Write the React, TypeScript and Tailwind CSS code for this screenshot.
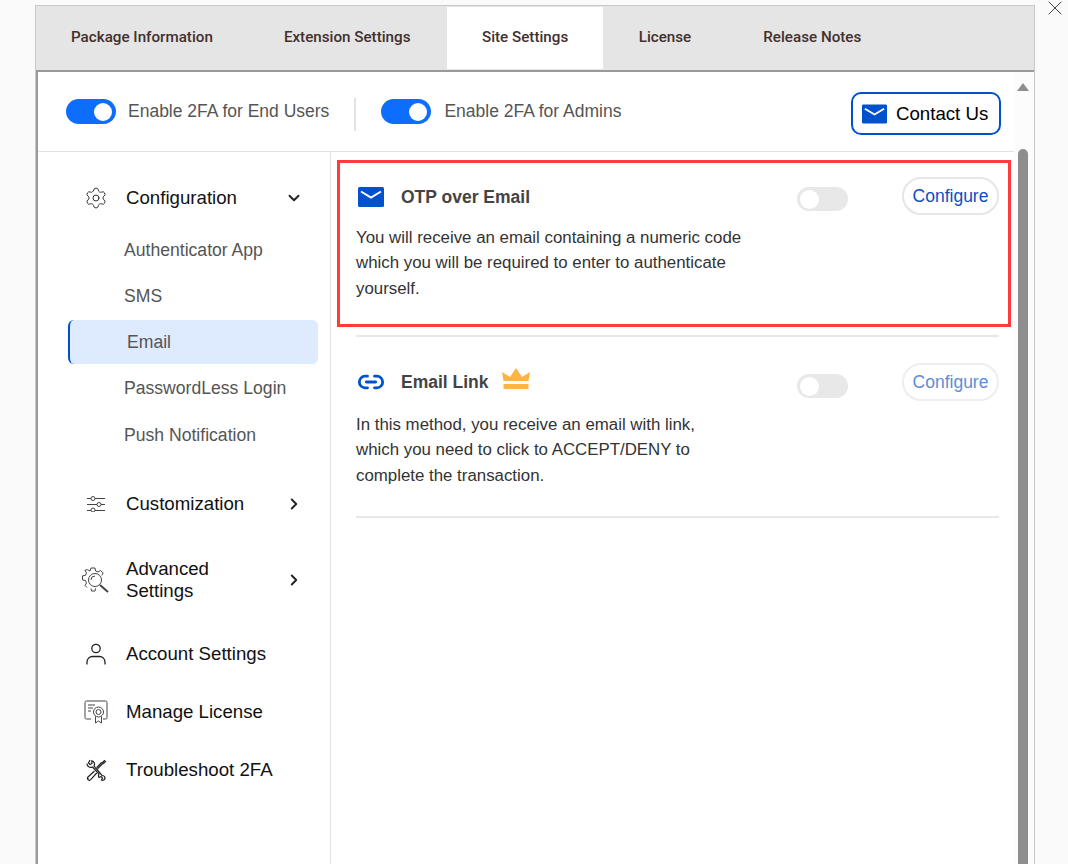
import React from "react";
import { Settings, ChevronDown, ChevronRight, Link2, X } from "lucide-react";

const MailIcon = ({ className }: { className: string }) => (
  <svg viewBox="0 0 26 20" className={className}>
    <rect x="0" y="0" width="26" height="20" rx="1.5" fill="#0052cc" />
    <path d="M3 4.500 L13 10.500 L23 4.500" fill="none" stroke="#fff" strokeWidth="2" />
  </svg>
);

const Switch = ({ on }: { on?: boolean }) =>
  on ? (
    <div className="flex h-[25px] w-[50px] shrink-0 items-center justify-end rounded-full bg-[#0d6efd] pr-[4px]">
      <div className="h-[18px] w-[18px] rounded-full bg-white" />
    </div>
  ) : (
    <div className="flex h-[24px] w-[51px] shrink-0 items-center rounded-full bg-[#e8e8e8] pl-[3px]">
      <div className="h-[19px] w-[19px] rounded-full bg-white" />
    </div>
  );

const SlidersIcon = () => (
  <svg viewBox="0 0 18 16" className="h-[16px] w-[18px]" fill="none" stroke="#444" strokeWidth="1">
    <path d="M0 2.500h4M8 2.500h10M0 8.500h10M14 8.500h4M0 14.500h4M8 14.500h10" />
    <circle cx="6" cy="2.500" r="2" />
    <circle cx="12" cy="8.500" r="2" />
    <circle cx="6" cy="14" r="2" />
  </svg>
);

const AdvancedIcon = () => (
  <svg viewBox="0 0 30 28" className="h-[28px] w-[30px]" fill="none" stroke="#444" strokeWidth="1">
    <path d="M10 2h4l.6 3 2.400 1 2.600-1.600 2.600 2.600-1.400 2.400M6 21.500l-2-2 1.500-2.600-1-2.400-3-.6v-4l3-.6 1-2.400-1.600-2.600L6.500 3.600 9 5l1-3M10 22.500l.5 2.500h3.500l.6-2.600" />
    <circle cx="14" cy="14" r="6.500" />
    <path d="M10 14a4 4 0 0 1 4-4" />
    <path d="M19 19l8 7" strokeWidth="2" />
  </svg>
);

const UserIcon = () => (
  <svg viewBox="0 0 20 22" className="h-[22px] w-[20px]" fill="none" stroke="#222" strokeWidth="1.300">
    <circle cx="10" cy="5.500" r="4.200" />
    <path d="M1 21.500v-2.500a5.500 5.500 0 0 1 5.500-5.500h7a5.500 5.500 0 0 1 5.500 5.500v2.500" />
  </svg>
);

const LicenseIcon = () => (
  <svg viewBox="0 0 24 24" className="h-[24px] w-[24px]" fill="none" stroke="#444" strokeWidth="1">
    <path d="M7 19H2.500A1.500 1.500 0 0 1 1 17.500v-15A1.500 1.500 0 0 1 2.500 1h19A1.500 1.500 0 0 1 23 2.500v15a1.500 1.500 0 0 1-1.500 1.500H19" />
    <path d="M4 5h7M4 8h5M4 11h3" />
    <circle cx="14.500" cy="12" r="5" />
    <circle cx="14.500" cy="12" r="2.500" />
    <path d="M11.500 16.500V23l3-2 3 2v-6.500" />
  </svg>
);

const ToolsIcon = () => (
  <svg viewBox="0 0 22 22" className="h-[22px] w-[22px]" fill="none" stroke="#222" strokeWidth="1.200">
    <path d="M5 1l-1.500 3L5 5.500 7 4.500l-.2-2.700A3.500 3.500 0 0 1 9 7l2 2.500 1 1 5 6a3 3 0 0 1 3 3 2.500 2.500 0 0 1-3.500 1.500l1-2-1.500-1.500-2 1A3.500 3.500 0 0 1 14 15L7.500 8A3.800 3.800 0 0 1 2 4.500" />
    <path d="M17.500 3.500l2-2 1 1-2 2-1.200.3-4.300 4.500-1-1 4.300-4.500z" />
    <path d="M9.500 12l-6.500 6a1.900 1.900 0 0 0 2.700 2.700l6-6.700M3.500 19.500h.5" />
  </svg>
);

const Crown = () => (
  <svg viewBox="0 0 28 22" className="h-[22px] w-[28px]" fill="#ffb340">
    <path d="M0 4 L8 9 L14 0 L20 9 L28 4 L26.500 13 H1.500 Z" />
    <rect x="1.500" y="16" width="25" height="5" rx="0.500" />
  </svg>
);

const NavItem = ({ icon, label, arrow, h }: { icon: React.ReactNode; label: React.ReactNode; arrow?: React.ReactNode; h: string }) => (
  <div className={`flex items-center ${h}`}>
    <div className="flex w-[58px] shrink-0 justify-center pr-[2px]">{icon}</div>
    <div className="w-[158px] whitespace-nowrap text-[18.670px] leading-[22px] text-[#111]">{label}</div>
    <div className="flex w-[20px] justify-center">{arrow}</div>
  </div>
);

const Sub = ({ children }: { children: React.ReactNode }) => (
  <div className="-ml-[30px] flex h-[46px] items-center pl-[86px] text-[17.600px] text-[#555]">{children}</div>
);

const Method = ({
  icon,
  title,
  extra,
  lines,
  light,
}: {
  icon: React.ReactNode;
  title: string;
  extra?: React.ReactNode;
  lines: string[];
  light?: boolean;
}) => (
  <div>
    <div className="flex h-[40px] items-center">
      <div className="flex w-[45px] shrink-0 items-center pl-[2px]">{icon}</div>
      <div className="text-[17.500px] font-bold text-[#444]">{title}</div>
      <div className="ml-[13px] mb-[6px] flex w-[28px]">{extra}</div>
      <div className="flex-1" />
      <div className={`mr-[54px] ${light ? "mt-[8px]" : "mt-[4px]"}`}>
        <Switch />
      </div>
      <div
        className={`flex h-[38px] w-[97px] items-center justify-center rounded-full border-2 text-[17.500px] ${
          light ? "border-[#eeeeee] text-[#5b8ed8]" : "mb-[2px] border-[#e6e6e6] text-[#0a4fc4]"
        }`}
      >
        Configure
      </div>
    </div>
    <div className={`${light ? "mt-[10px]" : "mt-[8px]"} text-[16.850px] leading-[25.300px] text-[#333]`}>
      {lines.map((l) => (
        <div key={l} className="whitespace-nowrap">
          {l}
        </div>
      ))}
    </div>
  </div>
);

export default function App() {
  return (
    <div className="flex h-[864px] w-[1068px] overflow-hidden bg-[#fafafa] pl-[35px] pt-[5px] font-['Liberation_Sans',sans-serif]">
      <div className="flex h-[859px] w-[1000px] shrink-0 flex-col border border-b-0 border-[#c8c8c8] bg-white">
        {/* tabs */}
        <div className="flex h-[66px] shrink-0 items-stretch border-b-2 border-[#9a9a9a] bg-[#e4e5e4] font-['Roboto',sans-serif] text-[15.200px] font-medium text-[#43302e]">
          <div className="flex items-center whitespace-nowrap pl-[35px] pr-[35px] pb-[1px]">Package Information</div>
          <div className="flex items-center whitespace-nowrap pl-[36px] pr-[37px] pb-[1px]">Extension Settings</div>
          <div className="my-[1px] flex items-center whitespace-nowrap bg-white px-[34.500px] pb-[1px]">Site Settings</div>
          <div className="flex items-center whitespace-nowrap px-[36px] pb-[1px]">License</div>
          <div className="flex items-center whitespace-nowrap px-[36px] pb-[1px]">Release Notes</div>
        </div>
        <div className="flex min-h-0 flex-1 border-l-2 border-[#9a9a9a]">
          <div className="flex min-w-0 flex-1 flex-col">
            {/* top row */}
            <div className="flex h-[80px] shrink-0 items-center border-b border-[#e2e2e2] pl-[28px] pr-[13px]">
              <Switch on />
              <div className="ml-[12px] whitespace-nowrap text-[17.500px] text-[#555]">Enable 2FA for End Users</div>
              <div className="mx-[25px] mt-[6px] h-[33px] w-[2px] bg-[#e2e2e2]" />
              <Switch on />
              <div className="ml-[13px] whitespace-nowrap text-[17.500px] text-[#555]">Enable 2FA for Admins</div>
              <div className="flex-1" />
              <div className="mt-[4px] flex h-[43px] w-[150px] items-center rounded-[10px] border-2 border-[#0052cc] pl-[9px] text-[18.670px] text-black">
                <MailIcon className="h-[20px] w-[25px]" />
                <span className="ml-[9px]">Contact Us</span>
              </div>
            </div>
            <div className="flex min-h-0 flex-1">
              {/* sidebar */}
              <div className="w-[293px] shrink-0 border-r border-[#e2e2e2] pl-[30px] pr-[12px] pt-[24px]">
                <NavItem h="h-[44px]" icon={<Settings size={24} strokeWidth={1} color="#333" />} label="Configuration" arrow={<ChevronDown size={18} strokeWidth={2.500} color="#222" />} />
                <div className="mt-[7px]">
                  <Sub>Authenticator App</Sub>
                  <Sub>SMS</Sub>
                </div>
                <div className="mt-[1px] flex h-[44px] items-center rounded-[6px] border-l-2 border-[#0052cc] bg-[#deeafd] pl-[57px] text-[17.600px] text-[#555]">
                  Email
                </div>
                <div className="mt-[1px]">
                  <Sub>PasswordLess Login</Sub>
                  <div className="mt-[1px]">
                    <Sub>Push Notification</Sub>
                  </div>
                </div>
                <div className="mt-[24px]">
                  <NavItem h="h-[44px]" icon={<SlidersIcon />} label="Customization" arrow={<ChevronRight size={18} strokeWidth={2.500} color="#222" />} />
                  <NavItem h="h-[44px] mt-[32px]" icon={<AdvancedIcon />} label={<>Advanced<br />Settings</>} arrow={<ChevronRight size={18} strokeWidth={2.500} color="#222" />} />
                  <NavItem h="h-[44px] mt-[30px]" icon={<UserIcon />} label="Account Settings" />
                  <NavItem h="h-[44px] mt-[14px]" icon={<LicenseIcon />} label="Manage License" />
                  <NavItem h="h-[44px] mt-[14px]" icon={<ToolsIcon />} label="Troubleshoot 2FA" />
                </div>
              </div>
              {/* main */}
              <div className="min-w-0 flex-1 pl-[6px] pr-[3px] pt-[8px]">
                <div className="h-[167px] border-[3px] border-[#ff3b3b] pl-[16px] pr-[9px] pt-[14px]">
                  <Method
                    icon={<MailIcon className="h-[20px] w-[26px]" />}
                    title="OTP over Email"
                    lines={[
                      "You will receive an email containing a numeric code",
                      "which you will be required to enter to authenticate",
                      "yourself.",
                    ]}
                  />
                </div>
                <div className="ml-[19px] mr-[12px] mt-[8px] h-[2px] bg-[#e8e8e8]" />
                <div className="ml-[19px] mr-[12px] pt-[25px]">
                  <Method
                    icon={<Link2 size={28} color="#0052cc" strokeWidth={2.400} className="-ml-[1px]" />}
                    title="Email Link"
                    extra={<Crown />}
                    light
                    lines={[
                      "In this method, you receive an email with link,",
                      "which you need to click to ACCEPT/DENY to",
                      "complete the transaction.",
                    ]}
                  />
                  <div className="mt-[28px] h-[2px] bg-[#e8e8e8]" />
                </div>
              </div>
            </div>
          </div>
          {/* scrollbar */}
          <div className="flex w-[20px] shrink-0 flex-col items-center bg-[#fcfcfc] pr-[2px] pt-[11px]">
            <div className="h-0 w-0 border-x-[6px] border-b-[8px] border-x-transparent border-b-[#8e8e8e]" />
            <div className="mt-[58px] w-[10px] flex-1 rounded-t-full bg-[#8e8e8e]" />
          </div>
        </div>
      </div>
      <div className="ml-[8px] -mt-[9px] h-fit">
        <X size={24} strokeWidth={1} color="#444" />
      </div>
    </div>
  );
}
